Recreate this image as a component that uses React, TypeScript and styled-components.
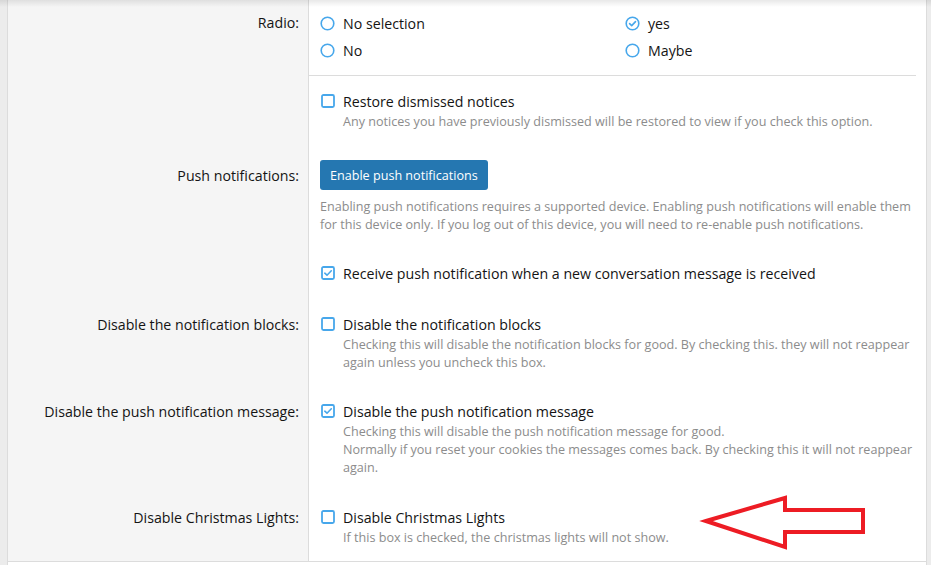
import React from "react";
import styled, { createGlobalStyle } from "styled-components";

const GlobalStyle = createGlobalStyle`
  html, body {
    margin: 0;
    padding: 0;
    background: #ececec;
  }
  body {
    font-family: "Open Sans", "Liberation Sans", sans-serif;
    color: #141414;
  }
`;

const Page = styled.div`
  position: relative;
  width: 931px;
  height: 565px;
  overflow: hidden;
  background: #ececec;
  padding: 0 4px 0 7px;
  box-sizing: border-box;
`;

const TopShade = styled.div`
  position: absolute;
  left: 0;
  right: 0;
  top: 0;
  height: 7px;
  background: linear-gradient(to bottom, rgba(0, 0, 0, 0.09), rgba(0, 0, 0, 0));
  pointer-events: none;
`;

const Form = styled.div`
  border-left: 1px solid #dcdcdc;
  border-right: 1px solid #dcdcdc;
  background: #fff;
  height: 100%;
`;

const Rows = styled.div`
  border-bottom: 1px solid #dcdcdc;
`;

const Row = styled.div`
  display: grid;
  grid-template-columns: 301px 1fr;
`;

const Label = styled.div<{ $top: number }>`
  background: #f5f5f5;
  border-right: 1px solid #dcdcdc;
  text-align: right;
  padding: ${(p) => p.$top}px 9px 0 10px;
  font-size: 14.2px;
  line-height: 20px;
`;

const Content = styled.div<{ $top?: number; $bottom?: number }>`
  padding: ${(p) => p.$top ?? 15}px 10px ${(p) => p.$bottom ?? 15}px 11px;
`;

const Separator = styled.div`
  border-top: 1px solid #dcdcdc;
  margin-left: -11px;
`;

const ChoiceGrid = styled.div`
  display: grid;
  grid-template-columns: 1fr 1fr;
  column-gap: 14px;
`;

const Choice = styled.div<{ $h?: number }>`
  display: flex;
  align-items: center;
  gap: 8px;
  height: ${(p) => p.$h ?? 20}px;
  font-size: 14.2px;
`;

const Hint = styled.div<{ $indent?: boolean }>`
  font-size: 12.6px;
  line-height: 18px;
  color: #8c8c8c;
  padding-left: ${(p) => (p.$indent ? 23 : 0)}px;
  margin-top: ${(p) => (p.$indent ? 2 : 8)}px;
`;

const PushButton = styled.button`
  display: block;
  height: 30px;
  padding: 0 10px;
  border: none;
  border-radius: 3px;
  background: #2577b1;
  color: #fff;
  font-family: inherit;
  font-size: 12.6px;
`;

const Arrow = styled.svg`
  position: absolute;
  left: 0;
  top: 0;
  pointer-events: none;
`;

const RadioIcon: React.FC<{ checked?: boolean }> = ({ checked }) => (
  <svg width="15" height="15" viewBox="0 0 15 15">
    <circle cx="7.5" cy="7.5" r="6.3" fill="none" stroke="#47a7eb" strokeWidth="1.6" />
    {checked && (
      <path d="M4.6 7.6 L6.7 9.6 L10.5 5.6" fill="none" stroke="#47a7eb" strokeWidth="1.6" strokeLinecap="round" strokeLinejoin="round" />
    )}
  </svg>
);

const CheckIcon: React.FC<{ checked?: boolean }> = ({ checked }) => (
  <svg width="15" height="14" viewBox="0 0 15 14">
    <rect x="2" y="1" width="12" height="12" rx="1.5" fill="#fff" stroke="#47a7eb" strokeWidth="1.8" />
    {checked && (
      <path d="M4.8 7.2 L7 9.2 L11.3 4.8" fill="none" stroke="#47a7eb" strokeWidth="1.6" strokeLinecap="round" strokeLinejoin="round" />
    )}
  </svg>
);

const App: React.FC = () => {
  return (
    <>
      <GlobalStyle />
      <Page>
        <Form>
          <Rows>
            <Row>
              <Label $top={13}>Radio:</Label>
              <Content $top={10} $bottom={0}>
                <ChoiceGrid>
                  <Choice $h={27}><RadioIcon />No selection</Choice>
                  <Choice $h={27}><RadioIcon checked />yes</Choice>
                  <Choice $h={27}><RadioIcon />No</Choice>
                  <Choice $h={27}><RadioIcon />Maybe</Choice>
                </ChoiceGrid>
              </Content>
            </Row>
            <Row>
              <Label $top={0} />
              <Content $top={11} $bottom={0}>
                <Separator />
              </Content>
            </Row>
            <Row>
              <Label $top={15} />
              <Content $bottom={14}>
                <Choice><CheckIcon />Restore dismissed notices</Choice>
                <Hint $indent>Any notices you have previously dismissed will be restored to view if you check this option.</Hint>
              </Content>
            </Row>
            <Row>
              <Label $top={21}>Push notifications:</Label>
              <Content $bottom={14}>
                <PushButton>Enable push notifications</PushButton>
                <Hint>
                  Enabling push notifications requires a supported device. Enabling push notifications will enable them
                  <br />
                  for this device only. If you log out of this device, you will need to re-enable push notifications.
                </Hint>
              </Content>
            </Row>
            <Row>
              <Label $top={15} />
              <Content $bottom={16}>
                <Choice><CheckIcon checked />Receive push notification when a new conversation message is received</Choice>
              </Content>
            </Row>
            <Row>
              <Label $top={16}>Disable the notification blocks:</Label>
              <Content $bottom={14}>
                <Choice><CheckIcon />Disable the notification blocks</Choice>
                <Hint $indent>
                  Checking this will disable the notification blocks for good. By checking this. they will not reappear
                  <br />
                  again unless you uncheck this box.
                </Hint>
              </Content>
            </Row>
            <Row>
              <Label $top={16}>Disable the push notification message:</Label>
              <Content>
                <Choice><CheckIcon checked />Disable the push notification message</Choice>
                <Hint $indent>
                  Checking this will disable the push notification message for good.
                  <br />
                  Normally if you reset your cookies the messages comes back. By checking this it will not reappear
                  <br />
                  again.
                </Hint>
              </Content>
            </Row>
            <Row>
              <Label $top={16}>Disable Christmas Lights:</Label>
              <Content $bottom={14}>
                <Choice><CheckIcon />Disable Christmas Lights</Choice>
                <Hint $indent>If this box is checked, the christmas lights will not show.</Hint>
              </Content>
            </Row>
          </Rows>
        </Form>
        <TopShade />
        <Arrow width="931" height="565" viewBox="0 0 931 565">
          <polygon
            points="706,521 785,498 785,510 863,510 863,532 785,532 785,547"
            fill="none"
            stroke="#ed1c24"
            strokeWidth="4"
            strokeLinejoin="miter"
          />
        </Arrow>
      </Page>
    </>
  );
};

export default App;
